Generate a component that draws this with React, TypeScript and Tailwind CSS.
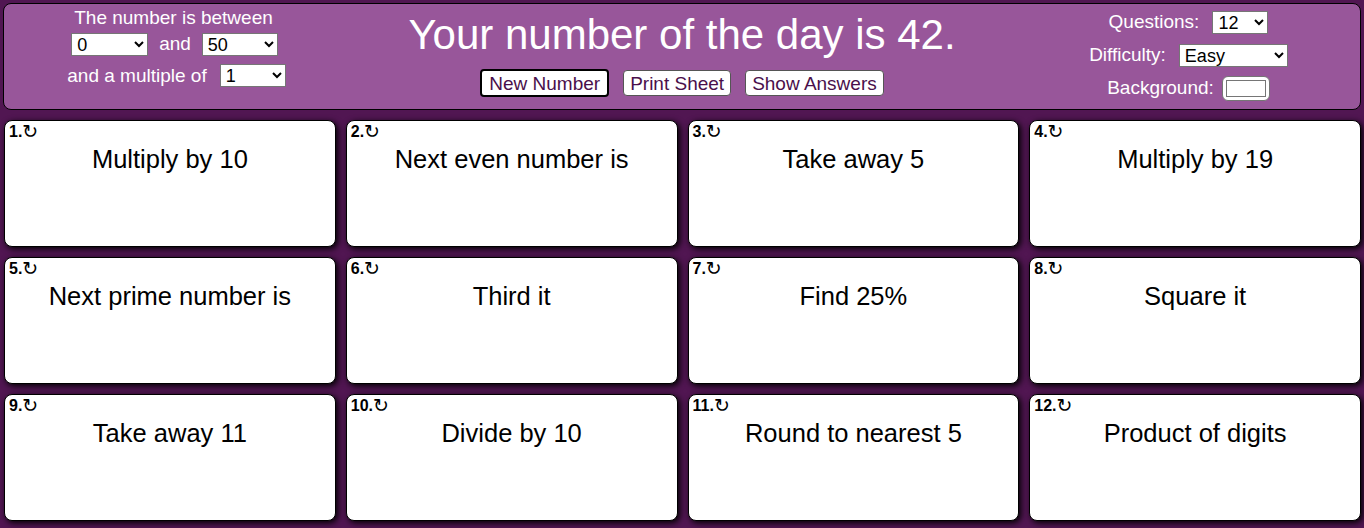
import { useState } from 'react';

const questions = [
  'Multiply by 10',
  'Next even number is',
  'Take away 5',
  'Multiply by 19',
  'Next prime number is',
  'Third it',
  'Find 25%',
  'Square it',
  'Take away 11',
  'Divide by 10',
  'Round to nearest 5',
  'Product of digits',
];

export default function App() {
  const [low, setLow] = useState('0');
  const [high, setHigh] = useState('50');
  const [multiple, setMultiple] = useState('1');
  const [count, setCount] = useState('12');
  const [difficulty, setDifficulty] = useState('Easy');

  const selectCls =
    'bg-white text-black border border-[#767676] h-[23px] text-[18px] leading-none pl-[1px] outline-none';

  return (
    <div
      className="min-h-screen bg-[#511652] p-[3px] text-[19px]"
      style={{ fontFamily: '"Liberation Sans", Arial, sans-serif' }}
    >
      <header className="grid grid-cols-[1fr_2fr_1fr] h-[107px] bg-[#98569a] border border-black rounded-lg text-white">
        <div className="flex flex-col items-center pt-[3px]">
          <div className="leading-[22px]">The number is between</div>
          <div className="flex items-center gap-[11px] mt-[1px] ml-[2px]">
            <select value={low} onChange={(e) => setLow(e.target.value)} className={`${selectCls} w-[77px]`}>
              <option>0</option>
              <option>10</option>
              <option>20</option>
            </select>
            <span>and</span>
            <select value={high} onChange={(e) => setHigh(e.target.value)} className={`${selectCls} w-[76px]`}>
              <option>50</option>
              <option>100</option>
            </select>
          </div>
          <div className="flex items-center gap-[13px] mt-[3px] ml-[6px]">
            <span>and a multiple of</span>
            <select value={multiple} onChange={(e) => setMultiple(e.target.value)} className={`${selectCls} w-[66px]`}>
              <option>1</option>
              <option>2</option>
              <option>5</option>
            </select>
          </div>
        </div>

        <div className="flex flex-col items-center">
          <h1 className="text-[42px] leading-[48px] mt-[7px]">Your number of the day is 42.</h1>
          <div className="flex items-center gap-[14px] mt-[10px] text-[19px] text-[#4a0f4b]">
            <button className="bg-white border-2 border-black rounded-[4px] h-[28px] px-[7px] leading-none">
              New Number
            </button>
            <button className="bg-white border border-[#555] rounded-[4px] h-[26px] px-[6px] leading-none">
              Print Sheet
            </button>
            <button className="bg-white border border-[#555] rounded-[4px] h-[26px] px-[6px] leading-none">
              Show Answers
            </button>
          </div>
        </div>

        <div className="flex flex-col items-center pt-[7px] gap-[10px] mr-[4px]">
          <div className="flex items-center gap-[13px] h-[23px]">
            <span>Questions:</span>
            <select value={count} onChange={(e) => setCount(e.target.value)} className={`${selectCls} w-[56px]`}>
              <option>8</option>
              <option>12</option>
              <option>16</option>
            </select>
          </div>
          <div className="flex items-center gap-[13px] h-[23px]">
            <span>Difficulty:</span>
            <select
              value={difficulty}
              onChange={(e) => setDifficulty(e.target.value)}
              className={`${selectCls} w-[109px]`}
            >
              <option>Easy</option>
              <option>Medium</option>
              <option>Hard</option>
            </select>
          </div>
          <div className="flex items-center gap-[8px] h-[23px]">
            <span>Background:</span>
            <span className="flex items-center justify-center w-[48px] h-[25px] bg-white border border-[#767676] rounded-[6px]">
              <span className="block w-[40px] h-[17px] border border-[#767676] bg-white" />
            </span>
          </div>
        </div>
      </header>

      <main className="grid grid-cols-4 gap-x-[10px] gap-y-[10px] mt-[10px] ml-[1px]">
        {questions.map((q, i) => (
          <div
            key={i}
            className="h-[127px] bg-white border border-black rounded-lg shadow-[2px_2px_6px_#000] px-[4px] pt-[1px] text-black"
          >
            <div className="flex items-center h-[19px] text-[16px] font-bold leading-[19px]">
              {i + 1}.
              <span className="font-normal text-[19px] leading-[19px]" style={{ fontFamily: '"DejaVu Sans", sans-serif' }}>
                ↻
              </span>
            </div>
            <div className="text-center text-[25.5px] leading-[30px] mt-[3px]">{q}</div>
          </div>
        ))}
      </main>
    </div>
  );
}
